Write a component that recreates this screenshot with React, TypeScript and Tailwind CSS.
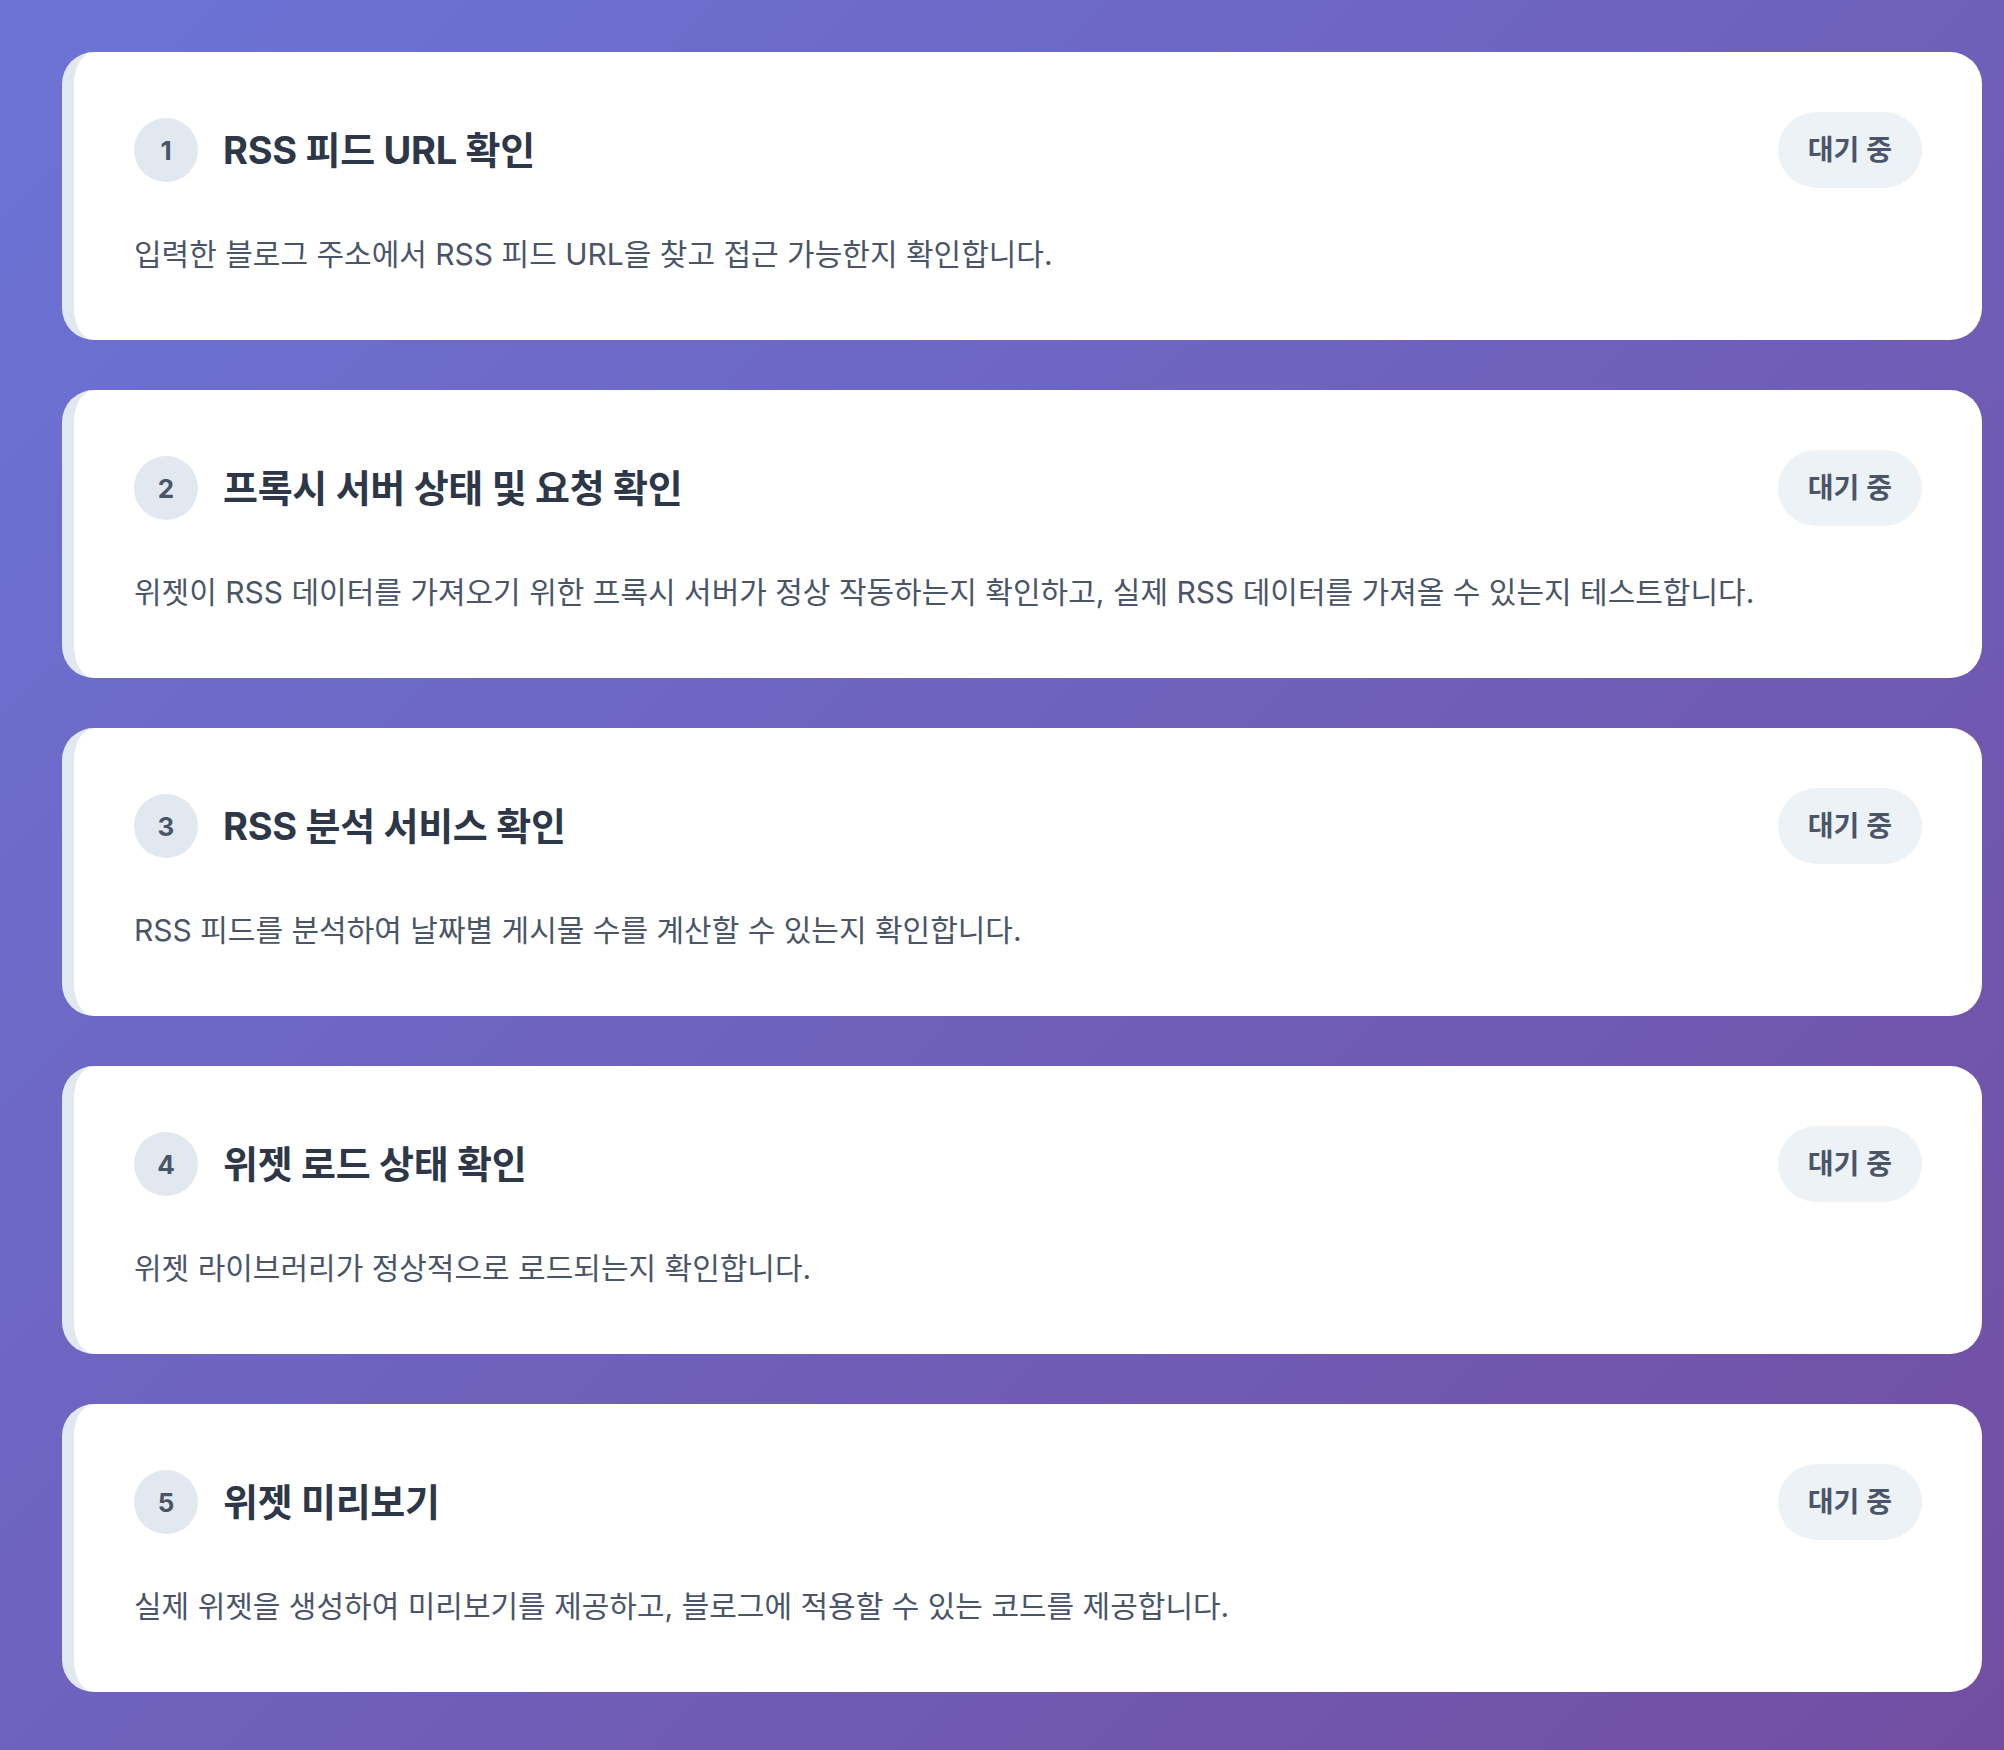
import React from "react";

const steps = [
  {
    n: 1,
    title: "RSS 피드 URL 확인",
    desc: "입력한 블로그 주소에서 RSS 피드 URL을 찾고 접근 가능한지 확인합니다.",
  },
  {
    n: 2,
    title: "프록시 서버 상태 및 요청 확인",
    desc: "위젯이 RSS 데이터를 가져오기 위한 프록시 서버가 정상 작동하는지 확인하고, 실제 RSS 데이터를 가져올 수 있는지 테스트합니다.",
  },
  {
    n: 3,
    title: "RSS 분석 서비스 확인",
    desc: "RSS 피드를 분석하여 날짜별 게시물 수를 계산할 수 있는지 확인합니다.",
  },
  {
    n: 4,
    title: "위젯 로드 상태 확인",
    desc: "위젯 라이브러리가 정상적으로 로드되는지 확인합니다.",
  },
  {
    n: 5,
    title: "위젯 미리보기",
    desc: "실제 위젯을 생성하여 미리보기를 제공하고, 블로그에 적용할 수 있는 코드를 제공합니다.",
  },
];

function StepCard({ n, title, desc }: { n: number; title: string; desc: string }) {
  return (
    <div className="h-[288px] bg-white rounded-[32px] border-l-[12px] border-solid border-[#e2e8f0] pl-[60px] pr-[60px] pt-[60px]">
      <div className="flex items-center justify-between h-[76px]">
        <div className="flex items-center gap-[25px]">
          <div className="w-16 h-16 rounded-full bg-[#e2e8f0] text-[#4a5568] flex items-center justify-center text-[26px] font-bold">
            {n}
          </div>
          <h3 className="text-[38px] tracking-[-0.3px] font-bold text-[#2d3748] leading-none">{title}</h3>
        </div>
        <div className="h-[76px] px-[30px] rounded-full bg-[#edf2f7] text-[#4a5568] text-[28px] font-semibold flex items-center">
          대기 중
        </div>
      </div>
      <p className="mt-[43px] text-[30px] leading-[46px] text-[#4a5568]">{desc}</p>
    </div>
  );
}

export default function App() {
  return (
    <div className="min-h-screen w-full bg-[linear-gradient(135deg,#6b74d6_0%,#724ea2_100%)] pt-[52px] pb-[58px] pl-[62px] [font-family:Inter,'Noto_Sans_CJK_KR',sans-serif]">
      <div className="w-[1920px] flex flex-col gap-[50px]">
        {steps.map((s) => (
          <StepCard key={s.n} {...s} />
        ))}
      </div>
    </div>
  );
}
